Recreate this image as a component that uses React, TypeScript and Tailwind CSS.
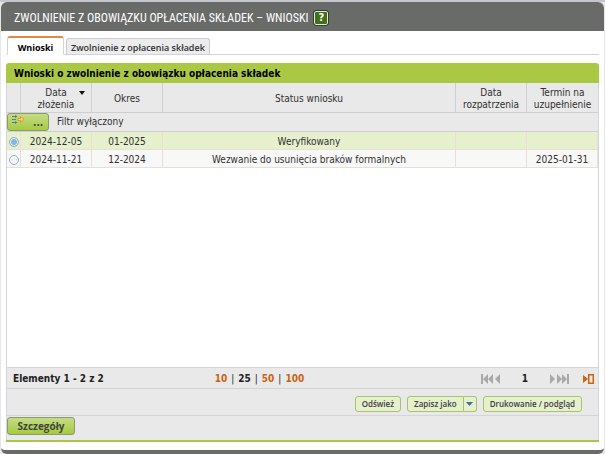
import { useState } from "react";

type Application = { date: string; period: string; status: string; reviewed: string; due: string };

const applications: Application[] = [
  { date: "2024-12-05", period: "01-2025", status: "Weryfikowany", reviewed: "", due: "" },
  { date: "2024-11-21", period: "12-2024", status: "Wezwanie do usunięcia braków formalnych", reviewed: "", due: "2025-01-31" },
];

const sizes = [10, 25, 50, 100];

const th = "border-r border-[#cfcfcf] p-0 pt-0.5 font-normal last:border-r-0";
const td = "border-r border-b border-[#eadfd3] p-0 pt-0.5";
const smallButton =
  "h-4 rounded-[3px] border border-[#a9c26c] bg-[#e6f0cd] text-center font-['Open_Sans',sans-serif] text-[8px] leading-3 font-semibold text-[#3c4040]";
const greenButton =
  "rounded-[3px] border border-[#8a9a78] bg-linear-to-b from-[#c6db83] to-[#a5cb3c] font-bold text-[#41463c]";

function FilterIcon() {
  return (
    <svg width="13" height="9" viewBox="0 0 13 9" fill="none">
      <path d="M0 1.500h3M0 4.500h4M0 7.500h3" stroke="#4f7f96" strokeWidth="1.2" />
      <path d="M3 0l2.500 1.500L3 3M3 6l2.500 1.500L3 9" fill="#4f7f96" />
      <path d="M6 3.500h2.500V1.500L12 4.500 8.500 7.500V5.500H6z" fill="#f5d777" stroke="#d49a35" strokeWidth="1" />
    </svg>
  );
}

function FirstIcon() {
  return (
    <svg width="12" height="10" viewBox="0 0 12 10" fill="#a9a9a9">
      <path d="M0 0h2v10H0zM7 0v10L2 5zM12 0v10L7 5z" />
    </svg>
  );
}

function PreviousIcon() {
  return (
    <svg width="5" height="10" viewBox="0 0 5 10" fill="#a9a9a9">
      <path d="M5 0v10L0 5z" />
    </svg>
  );
}

function GoToIcon() {
  return (
    <svg width="11" height="10" viewBox="0 0 11 10">
      <path d="M0 1l5 4-5 4z" fill="#cb6412" />
      <path d="M5.750 0.750h4.500v8.500h-4.500z" fill="none" stroke="#cb6412" strokeWidth="1.500" />
    </svg>
  );
}

export default function App() {
  const [selected, setSelected] = useState(0);

  return (
    <div className="flex min-h-screen flex-col border-t-2 border-[#c5c6cc] bg-[#e7e7e7] px-px font-['DejaVu_Sans_Condensed','DejaVu_Sans',sans-serif] text-[10px] leading-3 text-[#303030]">
      <main className="flex grow flex-col overflow-hidden rounded-md border-b-4 border-[#696b69] bg-white">
        <header className="flex h-[29px] shrink-0 items-center gap-1.5 bg-[#696b69] pt-0.5 pl-[13px]">
          <h1 className="font-['Roboto_Condensed','Liberation_Sans_Narrow',sans-serif] text-[12px] leading-5 font-normal text-white">
            ZWOLNIENIE Z OBOWIĄZKU OPŁACENIA SKŁADEK – WNIOSKI
          </h1>
          <button
            aria-label="Pomoc"
            className="size-3.5 rounded-xs border border-[#e4e8dc] bg-[#437017] text-[11px] leading-3 font-bold text-white outline outline-[#383b36]"
          >
            ?
          </button>
        </header>

        <div className="flex grow flex-col px-[5px] pt-1.5 pb-2">
          <nav className="flex h-[18px] items-end gap-0.5 border-b border-[#cfd5dc] pl-px font-['Open_Sans',sans-serif] text-[9px]">
            <button className="-mb-px h-[19px] w-[57px] rounded-t-[3px] border border-t-2 border-[#cfd5dc] border-t-[#e28a41] border-b-white bg-white pt-1 font-bold text-black">
              Wnioski
            </button>
            <button className="h-4 rounded-t-[3px] border border-b-0 border-[#c9cdd2] bg-[#ececec] px-1 pt-0.5 font-semibold text-[#303030]">
              Zwolnienie z opłacenia składek
            </button>
          </nav>

          <section className="mt-2 flex grow flex-col rounded-t-[3px] border-b-2 border-[#a8ca42]">
            <h2 className="h-5 rounded-t-[3px] bg-[#aac844] pt-px pl-2 leading-5 font-bold text-black">
              Wnioski o zwolnienie z obowiązku opłacenia składek
            </h2>
            <div className="grow border-x border-[#d3d6dc]">
              <table className="w-full table-fixed border-separate border-spacing-0 text-center">
                <colgroup>
                  <col className="w-3.5" />
                  <col className="w-[71px]" />
                  <col className="w-[71px]" />
                  <col />
                  <col className="w-[71px]" />
                  <col className="w-[71px]" />
                </colgroup>
                <thead className="bg-[#e9e9e9]">
                  <tr className="h-[29px]">
                    <th className={th} aria-label="Wybór" />
                    <th className={th}>
                      <button className="relative w-full">
                        Data
                        <br />
                        złożenia
                        <svg className="absolute top-1 right-1.5" width="6" height="4" viewBox="0 0 6 4">
                          <path d="M0 0h6L3 4z" fill="#111" />
                        </svg>
                      </button>
                    </th>
                    <th className={th}>Okres</th>
                    <th className={th}>Status wniosku</th>
                    <th className={th}>Data rozpatrzenia</th>
                    <th className={th}>Termin na uzupełnienie</th>
                  </tr>
                  <tr className="h-5">
                    <td colSpan={6} className="border-y border-[#cfcfcf] p-0">
                      <div className="flex items-center gap-2">
                        <button aria-label="Filtr" className={`${greenButton} flex h-[18px] w-[42px] items-start gap-2 pt-px pl-1`}>
                          <FilterIcon />
                          <span className="leading-4">...</span>
                        </button>
                        <span>Filtr wyłączony</span>
                      </div>
                    </td>
                  </tr>
                </thead>
                <tbody>
                  {applications.map((row, index) => (
                    <tr key={row.date} className={`h-[18px] ${selected === index ? "bg-[#e6f0cd]" : "bg-[#f8f8f8]"}`}>
                      <td className={td}>
                        <input
                          type="radio"
                          name="application"
                          aria-label={`Wniosek ${row.date}`}
                          checked={selected === index}
                          onChange={() => setSelected(index)}
                          className="mx-auto block size-2.5 appearance-none rounded-full border border-[#a3b3bf] bg-[#f1f5f8] checked:bg-[#7fbbe0] checked:inset-ring checked:inset-ring-[#e2eff7]"
                        />
                      </td>
                      <td className={td}>{row.date}</td>
                      <td className={td}>{row.period}</td>
                      <td className={td}>{row.status}</td>
                      <td className={td}>{row.reviewed}</td>
                      <td className={td}>{row.due}</td>
                    </tr>
                  ))}
                </tbody>
              </table>
            </div>

            <div className="border-x border-[#d3d6dc] bg-[#e9e9e9]">
              <div className="grid h-[22px] grid-cols-3 items-center border-y border-[#d5d5d5] pt-0.5 pr-1 pl-1.5 font-bold text-[#222]">
                <span>Elementy 1 - 2 z 2</span>
                <div className="flex pl-2">
                  {sizes.map((size, index) => (
                    <span key={size}>
                      {index > 0 && <span className="px-1 font-normal">|</span>}
                      {size === 25 ? size : <a href={`#${size}`} className="text-[#cb6412]">{size}</a>}
                    </span>
                  ))}
                </div>
                <div className="flex items-center justify-end">
                  <button aria-label="Pierwsza strona"><FirstIcon /></button>
                  <button aria-label="Poprzednia strona" className="ml-0.5"><PreviousIcon /></button>
                  <span className="w-[50px] text-center">1</span>
                  <button aria-label="Następna strona" className="rotate-180"><PreviousIcon /></button>
                  <button aria-label="Ostatnia strona" className="ml-0.5 rotate-180"><FirstIcon /></button>
                  <button aria-label="Przejdź do strony" className="ml-3.5"><GoToIcon /></button>
                </div>
              </div>
              <div className="flex h-[27px] items-center justify-end gap-1.5 border-b border-[#d5d5d5] pt-1 pr-4">
                <button className={`${smallButton} px-1.5`}>Odśwież</button>
                <div className="flex">
                  <button className={`${smallButton} rounded-r-none px-1.5`}>Zapisz jako</button>
                  <button aria-label="Wybierz format" className={`${smallButton} flex w-[13px] items-center justify-center rounded-l-none border-l-0`}>
                    <svg width="7" height="4" viewBox="0 0 7 4">
                      <path d="M0 0h7L3.500 4z" fill="#3f7191" />
                    </svg>
                  </button>
                </div>
                <button className={`${smallButton} px-1.5`}>Drukowanie / podgląd</button>
              </div>
              <div className="h-6 pt-px">
                <button className={`${greenButton} h-[18px] w-[68px] font-['Open_Sans',sans-serif]`}>Szczegóły</button>
              </div>
            </div>
          </section>
        </div>
      </main>
    </div>
  );
}
